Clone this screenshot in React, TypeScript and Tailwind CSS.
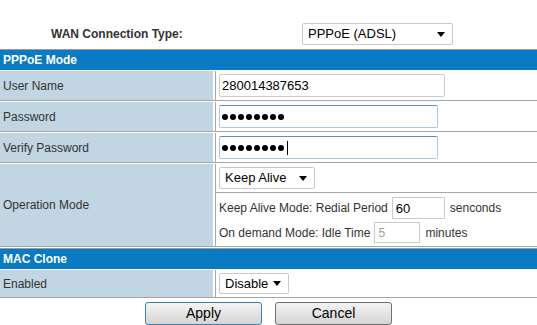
import React from "react";

const Caret = () => (
  <svg width="8" height="5" viewBox="0 0 8 5" className="shrink-0">
    <path d="M0 0 L8 0 L4 5 Z" fill="#000" />
  </svg>
);

const Select = ({ value, className }: { value: string; className: string }) => (
  <div
    className={`flex items-center justify-between bg-white border border-[#c9c9c9] rounded-[2px] pl-[5px] pr-[7px] text-[13px] text-black ${className}`}
  >
    <span>{value}</span>
    <Caret />
  </div>
);

const Dots = ({ caret }: { caret?: boolean }) => (
  <div className="flex items-center gap-[2px] pl-[2px]">
    {Array.from({ length: 8 }).map((_, i) => (
      <span key={i} className="w-[6px] h-[6px] rounded-full bg-black" />
    ))}
    {caret && <span className="ml-[1px] w-[1px] h-[14px] bg-black" />}
  </div>
);

const Row = ({
  label,
  height,
  children,
}: {
  label: string;
  height: string;
  children: React.ReactNode;
}) => (
  <div className={`flex mt-[1px] border-b border-[#a6a6a6] ${height}`}>
    <div className="w-[213px] shrink-0 bg-[#c1d5e2] flex items-center pl-[3px] text-[12px] text-[#333]">
      {label}
    </div>
    <div className="ml-[2px] flex-1 border-l border-[#a6a6a6] bg-white">
      {children}
    </div>
  </div>
);

const Header = ({ title }: { title: string }) => (
  <div className="h-[21px] border-t border-[#9c9c9c] bg-[#0a7bc2] text-white font-bold text-[12px] pl-[3px] flex items-center">
    {title}
  </div>
);

export default function App() {
  return (
    <div className="w-[537px] h-[325px] overflow-hidden bg-white font-['Liberation_Sans',Arial,sans-serif] text-[#333]">
      <div className="h-[49px] pt-[23px] flex items-start">
        <div className="w-[302px] h-[22px] flex items-center pl-[51px] font-bold text-[12px] text-[#333]">
          WAN Connection Type:
        </div>
        <Select value="PPPoE (ADSL)" className="w-[151px] h-[22px]" />
      </div>

      <Header title="PPPoE Mode" />

      <Row label="User Name" height="h-[30px]">
        <div className="h-full flex items-center pl-[3px]">
          <input
            readOnly
            defaultValue="280014387653"
            className="w-[226px] h-[23px] border border-[#cbcbcb] rounded-[2px] px-[2px] text-[13px] text-black outline-none"
          />
        </div>
      </Row>

      <Row label="Password" height="h-[30px]">
        <div className="h-full flex items-center pl-[3px]">
          <div className="w-[219px] h-[23px] flex items-center border border-[#a9c7e6] border-t-[#5a8fc4] rounded-[2px]">
            <Dots />
          </div>
        </div>
      </Row>

      <Row label="Verify Password" height="h-[30px]">
        <div className="h-full flex items-center pl-[3px]">
          <div className="w-[219px] h-[23px] flex items-center border border-[#a9c7e6] border-t-[#5a8fc4] rounded-[2px]">
            <Dots caret />
          </div>
        </div>
      </Row>

      <Row label="Operation Mode" height="h-[83px]">
        <div className="flex flex-col h-full">
          <div className="h-[28px] flex items-center pl-[3px]">
            <Select value="Keep Alive" className="w-[96px] h-[22px]" />
          </div>
          <div className="flex-1 border-t border-[#a6a6a6] pl-[3px] pt-[4px] text-[12px] text-[#333] flex flex-col gap-[3px]">
            <div className="flex items-center h-[22px]">
              <span>Keep Alive Mode: Redial Period</span>
              <input
                readOnly
                defaultValue="60"
                className="ml-[4px] w-[53px] h-[22px] border border-[#cbcbcb] px-[3px] text-[13px] text-black outline-none"
              />
              <span className="ml-[5px]">senconds</span>
            </div>
            <div className="flex items-center h-[21px]">
              <span>On demand Mode: Idle Time</span>
              <input
                readOnly
                defaultValue="5"
                className="ml-[4px] w-[46px] h-[21px] border border-[#cbcbcb] px-[3px] text-[12px] text-[#a0a0a0] outline-none"
              />
              <span className="ml-[5px]">minutes</span>
            </div>
          </div>
        </div>
      </Row>

      <div className="mt-[1px]">
        <Header title="MAC Clone" />
      </div>

      <Row label="Enabled" height="h-[28px]">
        <div className="h-full flex items-center pl-[3px]">
          <Select value="Disable" className="w-[70px] h-[21px]" />
        </div>
      </Row>

      <div className="mt-[4px] flex pl-[145px] gap-[13px]">
        <button className="w-[117px] h-[23px] border border-[#3c7fb1] rounded-[3px] bg-gradient-to-b from-[#f4f4f4] to-[#d4d4d4] text-[14px] text-black">
          Apply
        </button>
        <button className="w-[117px] h-[23px] border border-[#707070] rounded-[3px] bg-gradient-to-b from-[#f4f4f4] to-[#d4d4d4] text-[14px] text-black">
          Cancel
        </button>
      </div>
    </div>
  );
}
